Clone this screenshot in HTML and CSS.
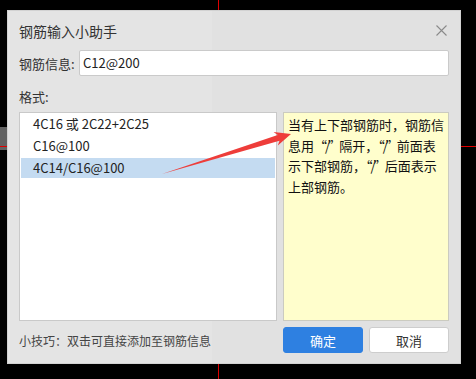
FILE: index.html
```html
<!DOCTYPE html>
<html lang="zh-CN">
<head>
<meta charset="utf-8">
<title>钢筋输入小助手</title>
<link rel="stylesheet" href="styles.css">
</head>
<body>
<div class="canvas">
  <div class="cad cad-top"></div>
  <div class="cad cad-bottom"></div>
  <div class="cad cad-left-block"></div>
  <div class="cad cad-left-line"></div>
  <div class="cad cad-right-line"></div>

  <div class="dialog">
    <div class="dlg-head">
      <span class="dlg-title">钢筋输入小助手</span>
      <span class="dlg-close">
        <svg width="11" height="11" viewBox="0 0 11 11"><path d="M0.5 0.5L10.5 10.5M10.5 0.5L0.5 10.5" stroke="#8a8a8a" stroke-width="1.1" fill="none"/></svg>
      </span>
    </div>
    <div class="field">
      <span class="field-label">钢筋信息:</span>
      <div class="input">C12@200</div>
    </div>
    <div class="section-label">格式:</div>
    <div class="panels">
      <ul class="format-list">
        <li>4C16 或 2C22+2C25</li>
        <li>C16@100</li>
        <li class="selected">4C14/C16@100</li>
      </ul>
      <div class="hint">当有上下部钢筋时，钢筋信<br>息用<span class="q">“/”</span>隔开，<span class="q">“/”</span>前面表<br>示下部钢筋，<span class="q">“/”</span>后面表示<br>上部钢筋。</div>
    </div>
    <div class="foot">
      <span class="tip">小技巧：双击可直接添加至钢筋信息</span>
      <div class="btns">
        <button class="btn btn-primary">确定</button>
        <button class="btn">取消</button>
      </div>
    </div>
  </div>

  <svg class="arrow" width="476" height="379" viewBox="0 0 476 379">
    <polygon points="162,174 277.7,134.9 273.6,132 291,134 277.8,145.4 279.5,140.7" fill="#ee3d3a"/>
  </svg>
</div>
</body>
</html>
```

FILE: styles.css
```css
html, body {
  margin: 0;
  padding: 0;
  background: #000;
}

body {
  width: 476px;
  height: 379px;
  overflow: hidden;
  font-family: "Noto Sans CJK SC", "Noto Sans", sans-serif;
  color: #333;
}

.canvas {
  position: relative;
  width: 476px;
  height: 379px;
  padding: 10px 0 0 7px;
  box-sizing: border-box;
}

.cad {
  position: absolute;
}

.cad-top {
  left: 218px;
  top: 0;
  width: 1px;
  height: 10px;
  background: #e00000;
}

.cad-bottom {
  left: 218px;
  top: 364px;
  width: 1px;
  height: 15px;
  background: #e00000;
}

.cad-left-block {
  left: 0;
  top: 127px;
  width: 7px;
  height: 23px;
  background: #626262;
}

.cad-left-line {
  left: 0;
  top: 146px;
  width: 7px;
  height: 1px;
  background: #e00000;
}

.cad-right-line {
  left: 461px;
  top: 146px;
  width: 15px;
  height: 1px;
  background: #e00000;
}

.dialog {
  width: 454px;
  height: 354px;
  box-sizing: border-box;
  border: 1px solid #d2d2d2;
  background: linear-gradient(to right, #e4e4e4 0, #e4e4e4 204px, #e1e1e1 204px, #e1e1e1 100%);
  padding: 0 11px 10px;
  display: flex;
  flex-direction: column;
}

.dlg-head {
  height: 39px;
  display: flex;
  align-items: center;
  justify-content: space-between;
}

.dlg-title {
  font-size: 14px;
  color: #333;
}

.dlg-close {
  display: flex;
  margin-right: 2px;
}

.field {
  height: 26px;
  display: flex;
  align-items: center;
}

.field-label {
  width: 60px;
  font-size: 13px;
}

.input {
  flex: 1;
  height: 26px;
  box-sizing: border-box;
  background: #fff;
  border: 1px solid #cacaca;
  border-radius: 2px;
  padding-left: 3px;
  font-size: 13px;
  line-height: 24px;
  color: #222;
}

.section-label {
  margin: 11px 0 5px;
  line-height: 20px;
  font-size: 13px;
}

.panels {
  height: 209px;
  display: flex;
  gap: 6px;
}

.format-list {
  width: 258px;
  box-sizing: border-box;
  margin: 0;
  padding: 1px 0 0;
  list-style: none;
  background: #fff;
  border: 1px solid #c9c9c9;
  display: flex;
  flex-direction: column;
  gap: 2px;
}

.format-list li {
  height: 20px;
  line-height: 20px;
  margin: 0 1px;
  padding-left: 12px;
  font-size: 13px;
  color: #222;
}

.format-list li.selected {
  background: #c4dbf1;
}

.hint {
  flex: 1;
  box-sizing: border-box;
  background: #fffecc;
  border: 1px solid #cbcbc0;
  padding: 2px 0 0 4px;
  font-size: 13px;
  line-height: 20.5px;
  color: #111;
  white-space: nowrap;
}

.hint .q {
  letter-spacing: -2px;
}

.foot {
  margin-top: 6px;
  height: 26px;
  display: flex;
  align-items: center;
  justify-content: space-between;
}

.tip {
  font-size: 12px;
  color: #444;
}

.btns {
  display: flex;
  gap: 6px;
}

.btn {
  width: 80px;
  height: 26px;
  box-sizing: border-box;
  border: 1px solid #cdcdcd;
  border-radius: 3px;
  background: #fff;
  font-family: inherit;
  font-size: 13px;
  color: #333;
  padding: 0;
}

.btn-primary {
  background: #2e80e1;
  border-color: #2e80e1;
  color: #fff;
}

.arrow {
  position: absolute;
  left: 0;
  top: 0;
  pointer-events: none;
}
```
